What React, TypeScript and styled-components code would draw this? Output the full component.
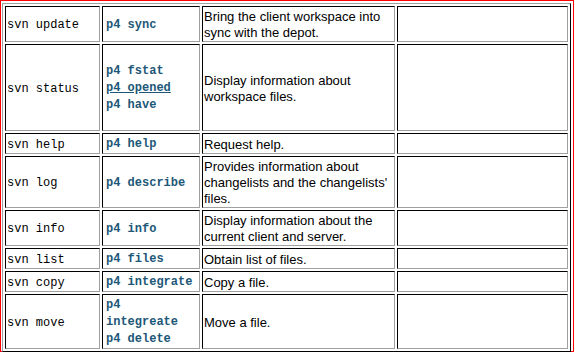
import React from 'react';
import styled, { createGlobalStyle } from 'styled-components';

const GlobalStyle = createGlobalStyle`
  html, body { margin: 0; padding: 0; background: #ffffff; }
  body { font-family: "Liberation Sans", Arial, sans-serif; }
`;

const Frame = styled.div`
  box-sizing: border-box;
  width: 574px;
  height: 352px;
  border: 1px solid #ff0000;
  padding: 2px 1px 1px 1px;
`;

const Table = styled.table`
  border-collapse: separate;
  border-spacing: 2px;
  border-width: 1px;
  border-style: solid;
  border-color: #a0a0a0 #000000 #000000 #a0a0a0;
  table-layout: fixed;
  width: 569px;
`;

const Col = styled.col<{ $w: number }>`
  width: ${(p) => p.$w}px;
`;

const Row = styled.tr<{ $h: number }>`
  height: ${(p) => p.$h}px;
`;

const Cell = styled.td`
  box-sizing: border-box;
  border-width: 1px;
  border-style: solid;
  border-color: #000000 #a0a0a0 #a0a0a0 #000000;
  padding: 2px 1px 0 1px;
  vertical-align: middle;
`;

const SvnCell = styled(Cell)`
  font-family: "Liberation Mono", "Courier New", monospace;
  font-size: 12px;
  line-height: 16px;
  color: #000000;
  white-space: nowrap;
`;

const P4Cell = styled(Cell)`
  font-family: "Liberation Mono", "Courier New", monospace;
  font-size: 12px;
  font-weight: bold;
  line-height: 17px;
  color: #1d5878;
  padding-left: 3px;
`;

const P4Line = styled.div<{ $link?: boolean }>`
  text-decoration: ${(p) => (p.$link ? 'underline' : 'none')};
`;

const DescCell = styled(Cell)`
  font-family: "Liberation Sans", Arial, sans-serif;
  font-size: 13px;
  line-height: 16px;
  color: #000000;
`;

type Item = { svn: string; p4: { text: string; link?: boolean }[]; desc: string; h: number };

const rows: Item[] = [
  { svn: 'svn update', p4: [{ text: 'p4 sync' }], desc: 'Bring the client workspace into sync with the depot.', h: 36 },
  {
    svn: 'svn status',
    p4: [{ text: 'p4 fstat' }, { text: 'p4 opened', link: true }, { text: 'p4 have' }],
    desc: 'Display information about workspace files.',
    h: 87,
  },
  { svn: 'svn help', p4: [{ text: 'p4 help' }], desc: 'Request help.', h: 20 },
  {
    svn: 'svn log',
    p4: [{ text: 'p4 describe' }],
    desc: "Provides information about changelists and the changelists' files.",
    h: 52,
  },
  { svn: 'svn info', p4: [{ text: 'p4 info' }], desc: 'Display information about the current client and server.', h: 36 },
  { svn: 'svn list', p4: [{ text: 'p4 files' }], desc: 'Obtain list of files.', h: 21 },
  { svn: 'svn copy', p4: [{ text: 'p4 integrate' }], desc: 'Copy a file.', h: 20 },
  {
    svn: 'svn move',
    p4: [{ text: 'p4' }, { text: 'integreate' }, { text: 'p4 delete' }],
    desc: 'Move a file.',
    h: 54,
  },
];

export default function App() {
  return (
    <>
      <GlobalStyle />
      <Frame>
        <Table>
          <colgroup>
            <Col $w={95} />
            <Col $w={98} />
            <Col $w={193} />
            <Col $w={171} />
          </colgroup>
          <tbody>
            {rows.map((r) => (
              <Row key={r.svn} $h={r.h}>
                <SvnCell>{r.svn}</SvnCell>
                <P4Cell>
                  {r.p4.map((l) => (
                    <P4Line key={l.text} $link={l.link}>
                      {l.text}
                    </P4Line>
                  ))}
                </P4Cell>
                <DescCell>{r.desc}</DescCell>
                <DescCell />
              </Row>
            ))}
          </tbody>
        </Table>
      </Frame>
    </>
  );
}
